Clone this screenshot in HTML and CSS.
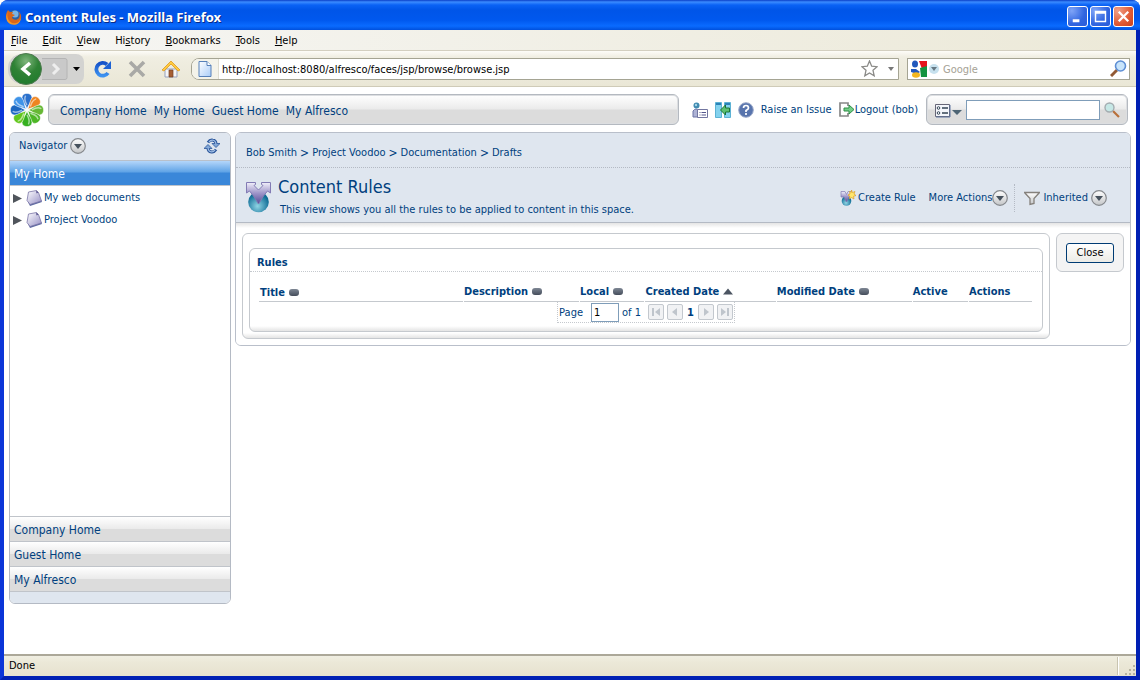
FILE: index.html
```html
<!DOCTYPE html>
<html lang="en">
<head>
<meta charset="utf-8">
<title>Content Rules - Mozilla Firefox</title>
<link rel="stylesheet" href="styles.css">
</head>
<body>
<svg class="defs" aria-hidden="true">
  <defs>
    <linearGradient id="silver" x1="0" y1="0" x2="0" y2="1"><stop offset="0" stop-color="#fff"/><stop offset="1" stop-color="#c4c6c8"/></linearGradient>
    <linearGradient id="blueG" x1="0" y1="0" x2="0" y2="1"><stop offset="0" stop-color="#1552c8"/><stop offset="1" stop-color="#3d92f0"/></linearGradient>
    <radialGradient id="greenG" cx=".5" cy=".25" r=".8"><stop offset="0" stop-color="#7fb57c"/><stop offset=".5" stop-color="#2f8235"/><stop offset="1" stop-color="#1f7a2c"/></radialGradient>
    <radialGradient id="teal" cx=".45" cy=".7" r=".6"><stop offset="0" stop-color="#8fd4e4"/><stop offset="1" stop-color="#0c6a94"/></radialGradient>
    <linearGradient id="violetV" x1="0" y1="0" x2="0" y2="1"><stop offset="0" stop-color="#f2f0fb"/><stop offset=".5" stop-color="#9d94c8"/><stop offset="1" stop-color="#554b98"/></linearGradient>
    <linearGradient id="spaceG" x1="0" y1="0" x2="1" y2="1"><stop offset="0" stop-color="#fff"/><stop offset=".8" stop-color="#aaa5d0"/><stop offset="1" stop-color="#7f79b2"/></linearGradient>
    <linearGradient id="page" x1="0" y1="0" x2="1" y2="1"><stop offset="0" stop-color="#fff"/><stop offset="1" stop-color="#a9ccf8"/></linearGradient>
    <linearGradient id="pill" x1="0" y1="0" x2="0" y2="1"><stop offset="0" stop-color="#7e8794"/><stop offset="1" stop-color="#454d5b"/></linearGradient>
    <symbol id="drop" viewBox="0 0 16 16"><circle cx="8" cy="8" r="7.3" fill="url(#silver)" stroke="#85888c" stroke-width="1.2"/><path d="M4 6h8l-4 5z" fill="#47525d"/></symbol>
    <symbol id="pillIcon" viewBox="0 0 10 7"><rect width="10" height="7" rx="3" fill="url(#pill)"/></symbol>
    <symbol id="space" viewBox="0 0 16 16"><path d="M2 12l2 4 12-4-1-2z" fill="#5b6aa2"/><path d="M2.500 2l8-1.500 2 2 3 8.500-11.500 3.500-3-4z" fill="url(#spaceG)" stroke="#7a75a6" stroke-width=".8"/><path d="M10 .5l.5 3 2-1z" fill="#5b5690"/></symbol>
    <symbol id="rule" viewBox="0 0 26 32"><circle cx="12.500" cy="21" r="10.300" fill="url(#teal)"/><path d="M.5 1.500h9v2l-1.500 1 4.500 4.500L17 4.500l-1.500-1v-2h9V12l-3-2-4 5-5 8-5-8-4-5-3 2z" fill="url(#violetV)" stroke="#827bb4"/></symbol>
    <symbol id="petal" viewBox="-16 -16 32 32" overflow="visible"><path d="M0-1C-.5-4-4.700-8-4.700-11.500-4.700-17 4.700-17 4.700-11.500 4.700-8 .5-4 0-1z" fill="currentColor" stroke="#fff" stroke-width=".5"/><path d="M-.3-5Q-3-10-1.500-13" fill="none" stroke="#fff" stroke-opacity=".55" stroke-width="1.400" stroke-linecap="round"/></symbol>
    <symbol id="turn" viewBox="0 0 16 16" overflow="visible"><path d="M4 4.500Q6 1.500 8.500 2 12 2.500 12 6" fill="none" stroke="#2c579b" stroke-width="3"/><path d="M8 5.500h8l-4 4z" fill="#7fa5d6" stroke="#2c579b" stroke-width=".8"/><path d="M5 4.200Q6.500 2 8.500 2.200 11.800 2.600 12 6.500" fill="none" stroke="#9dbce4" stroke-width="1.200"/></symbol>
  </defs>
</svg>
<div class="window">
  <header class="titlebar">
    <svg class="i16" viewBox="0 0 16 16"><circle cx="8" cy="8" r="7" fill="#2b62a8"/><circle cx="9" cy="5" r="3.500" fill="#79b4e5"/><path d="M2 1l2 2 3 0-1 2 3 1-3 2c0 3 5 4 7 1 1-2 1-5-1-7 4 3 4 8 1 11-4 4-10 2-12-2S0 4 2 1z" fill="#d9661a"/><path d="M2 3c-2 4 0 9 4 11 3 1 7 0 9-5-1 8-10 9-14 3C0 9 0 6 2 3z" fill="#f0962a"/></svg>
    <h1>Content Rules - Mozilla Firefox</h1>
    <div class="winbtns">
      <button class="wb" aria-label="Minimize"><svg viewBox="0 0 20 20"><path d="M5 13h7v3H5z" fill="#fff"/></svg></button>
      <button class="wb" aria-label="Maximize"><svg viewBox="0 0 20 20"><path d="M4 4h12v12H4zM5.500 7v7.500h9V7z" fill="#fff" fill-rule="evenodd"/></svg></button>
      <button class="wb red" aria-label="Close window"><svg viewBox="0 0 20 20"><path d="M5 5l10 10M15 5L5 15" stroke="#fff" stroke-width="2.400"/></svg></button>
    </div>
  </header>
  <div class="frame">
    <nav class="menubar">
      <button><u>F</u>ile</button><button><u>E</u>dit</button><button><u>V</u>iew</button><button>Hi<u>s</u>tory</button><button><u>B</u>ookmarks</button><button><u>T</u>ools</button><button><u>H</u>elp</button>
    </nav>
    <div class="toolbar">
      <div class="backfwd">
        <button class="back" aria-label="Back"><svg viewBox="0 0 32 32"><circle cx="16" cy="16" r="15.500" fill="url(#greenG)" stroke="#4f7a50"/><path d="M20 10l-7 6 7 6" fill="none" stroke="#fff" stroke-width="3.500"/></svg></button>
        <button class="fwd" aria-label="Forward"><svg viewBox="0 0 26 22"><path d="M0 .5h23q2 0 2 2v17q0 2-2 2H0" fill="#c9c9c9" stroke="#b4b4b4"/><path d="M11 6l5 5-5 5" fill="none" stroke="#eee" stroke-width="3"/></svg></button>
        <button class="hist" aria-label="History list"><svg viewBox="0 0 7 4"><path d="M0 0h7L3.500 4z"/></svg></button>
      </div>
      <button class="tb" aria-label="Reload"><svg viewBox="0 0 18 18"><path d="M14 13A6.400 6.400 0 1 1 13 4.500" fill="none" stroke="url(#blueG)" stroke-width="3.800"/><path d="M17 1v8H9z" fill="#1d62d4"/></svg></button>
      <button class="tb" aria-label="Stop"><svg viewBox="0 0 18 18"><path d="M2 2l14 14M16 2L2 16" stroke="#a9a9a6" stroke-width="3.600"/></svg></button>
      <button class="tb" aria-label="Home"><svg viewBox="0 0 18 18"><path d="M3 9h12v8H3z" fill="#f5f5f7" stroke="#96a1bd"/><path d="M7 10h4v7H7z" fill="#a65f34" stroke="#724326" stroke-width=".7"/><path d="M0 10L9 1l9 9-2 1-7-7-7 7z" fill="#ffcb3e" stroke="#dd9821" stroke-width=".8"/></svg></button>
      <form class="url">
        <svg class="pageicon" viewBox="0 0 15 18"><path d="M1.500 1.500h8l4 4v11h-12z" fill="url(#page)" stroke="#5780b9"/><path d="M9.500 1.500v4h4" fill="#fff" stroke="#5780b9"/></svg>
        <input type="text" aria-label="Address" value="http://localhost:8080/alfresco/faces/jsp/browse/browse.jsp">
        <button type="button" class="star" aria-label="Bookmark"><svg viewBox="0 0 17 17"><path d="M8.500 1l2.200 5.200 5.300.5-4 3.600 1.200 5.500-4.700-2.900-4.700 2.900L5 10.300 1 6.700l5.300-.5z" fill="#fff" stroke="#8b8b88" stroke-width="1.300"/></svg></button>
        <button type="button" class="mini" aria-label="Show history"><svg viewBox="0 0 6 4"><path d="M0 0h6L3 4z" fill="#777"/></svg></button>
      </form>
      <form class="gsearch">
        <button type="button" class="engine" aria-label="Search engine"><svg viewBox="0 0 30 20"><path d="M9 2h8v7l-5 1z" fill="#e5131a"/><path d="M10 9l7-2v11h-6z" fill="#14933f"/><ellipse cx="5" cy="5" rx="3" ry="3.600" fill="#2158bc"/><path d="M1 10h5l4 3-3 2-6-2z" fill="#2158bc"/><ellipse cx="6" cy="16" rx="4" ry="2.700" fill="#f3b61f"/><circle cx="24" cy="10" r="5" fill="#c7e1ee"/><path d="M21 8h6l-3 4z" fill="#667883"/></svg></button>
        <input type="text" aria-label="Web search" placeholder="Google">
        <button type="button" class="star" aria-label="Search"><svg viewBox="0 0 17 17"><path d="M1 16l6-6" stroke="#925a36" stroke-width="3"/><circle cx="10.500" cy="6" r="5" fill="#c8e4fb" stroke="#5e8ed4" stroke-width="1.600"/></svg></button>
      </form>
    </div>

    <div class="page">
      <div class="apphead">
        <svg class="logo" viewBox="-16 -16 32 32">
          <g color="#2a70cc"><use href="#petal" x="-16" y="-16" width="32" height="32"/></g>
          <g color="#ee8420" transform="rotate(45)"><use href="#petal" x="-16" y="-16" width="32" height="32"/></g>
          <g color="#66b834" transform="rotate(90)"><use href="#petal" x="-16" y="-16" width="32" height="32"/></g>
          <g color="#4db626" transform="rotate(135)"><use href="#petal" x="-16" y="-16" width="32" height="32"/></g>
          <g color="#36b020" transform="rotate(180)"><use href="#petal" x="-16" y="-16" width="32" height="32"/></g>
          <g color="#62c71c" transform="rotate(225)"><use href="#petal" x="-16" y="-16" width="32" height="32"/></g>
          <g color="#1b66c0" transform="rotate(270)"><use href="#petal" x="-16" y="-16" width="32" height="32"/></g>
          <g color="#3f93e8" transform="rotate(315)"><use href="#petal" x="-16" y="-16" width="32" height="32"/></g>
        </svg>
        <nav class="tabs"><a href="#">Company Home</a><a href="#">My Home</a><a href="#">Guest Home</a><a href="#">My Alfresco</a></nav>
        <div class="tools">
          <a href="#" aria-label="User profile"><svg class="i16" viewBox="0 0 16 16"><path d="M1 15V9q3-4 6 0v6z" fill="#adb2d5" stroke="#6d74a6"/><circle cx="4.500" cy="3.500" r="3" fill="#3f8ab0"/><circle cx="4" cy="3" r="1.200" fill="#a5d4e6"/><path d="M5.500 7.500h10v8h-10z" fill="#fff" stroke="#7276a0"/><path d="M7.500 10.500h1m1 0h4.500M7.500 13h1m1 0h4.500" stroke="#55578d"/></svg></a>
          <a href="#" aria-label="Toggle shelf"><svg class="i16" viewBox="0 0 16 16"><path d="M.5.500h6v15h-6zM9.500.500h6v15h-6z" fill="#83d2ee" stroke="#5cb2d4"/><path d="M1 1h5v2H1zM10 1h5v2h-5z" fill="#2b82b8"/><path d="M5.500 8l5-5v3h4v4h-4v3z" fill="#5cc072" stroke="#187434"/></svg></a>
          <a href="#" aria-label="Help"><svg class="i16" viewBox="0 0 16 16"><circle cx="8" cy="8" r="7.300" fill="#5874ad" stroke="#9ba9c9"/><path d="M5.500 6q0-2.500 2.500-2.500T10.500 6Q10.500 7.300 8 8.500V10M8 11v2" fill="none" stroke="#fff" stroke-width="1.700"/></svg></a>
          <a href="#" class="issue">Raise an Issue</a>
          <a href="#" class="logout"><svg class="i16" viewBox="0 0 16 16"><path d="M9 4V1H1v13h8v-3" fill="none" stroke="#888" stroke-width="1.700"/><path d="M5 6h5V3l5 4.500-5 4.500V9H5z" fill="#72cf87" stroke="#2e8c47"/></svg>Logout (bob)</a>
        </div>
        <form class="asearch">
          <button type="button" class="opts" aria-label="Search options"><svg viewBox="0 0 28 14"><path d="M.5.500h14v12H.5z" fill="#f4f6fb" stroke="#667"/><path d="M1 13h14V1" fill="none" stroke="#5e74a0"/><circle cx="3.500" cy="4" r="1.300" fill="#fff" stroke="#334455"/><circle cx="3.500" cy="9" r="1.300" fill="#fff" stroke="#334455"/><path d="M7 4h6M7 9h6" stroke="#334455" stroke-width="1.600"/><path d="M17 6h10l-5 5z" fill="#4d6474"/></svg></button>
          <input type="text" aria-label="Search content">
          <button type="button" class="go" aria-label="Go"><svg class="i16" viewBox="0 0 16 16"><path d="M9 9l6 6" stroke="#b8703b" stroke-width="2.200"/><circle cx="5.500" cy="5.500" r="4.500" fill="#c6e8e6" stroke="#a3acb0" stroke-width="1.400"/></svg></button>
        </form>
      </div>

      <div class="cols">
        <aside class="navigator">
          <div class="navhead"><span>Navigator</span><button aria-label="Navigator menu"><svg class="i16"><use href="#drop"/></svg></button>
            <button class="refresh" aria-label="Refresh"><svg class="i16" viewBox="0 0 16 16"><use href="#turn" width="16" height="16"/><use href="#turn" width="16" height="16" transform="rotate(180 8 8)"/></svg></button></div>
          <a href="#" class="current">My Home</a>
          <ul class="tree">
            <li><svg class="tri" viewBox="0 0 9 9"><path d="M0 0l9 4.500L0 9z"/></svg><a href="#"><svg class="i16"><use href="#space"/></svg>My web documents</a></li>
            <li><svg class="tri" viewBox="0 0 9 9"><path d="M0 0l9 4.500L0 9z"/></svg><a href="#"><svg class="i16"><use href="#space"/></svg>Project Voodoo</a></li>
          </ul>
          <a href="#" class="area">Company Home</a><a href="#" class="area">Guest Home</a><a href="#" class="area">My Alfresco</a>
          <div class="navfoot"></div>
        </aside>
        <main class="main">
          <nav class="crumbs"><a href="#">Bob Smith</a><b>&gt;</b><a href="#">Project Voodoo</a><b>&gt;</b><a href="#">Documentation</a><b>&gt;</b><a href="#">Drafts</a></nav>
          <div class="heading">
            <svg class="ruleicon"><use href="#rule"/></svg>
            <div class="titles"><h2>Content Rules</h2><p>This view shows you all the rules to be applied to content in this space.</p></div>
            <div class="actions">
              <a href="#" class="create"><svg class="i16" viewBox="0 0 16 16"><circle cx="6.500" cy="11" r="4.800" fill="url(#teal)"/><path d="M1 1.500h4l1.500 3L8 1.500h3V7L9 7l-2.500 5L4 7 1 7z" fill="url(#violetV)" stroke="#827bb4" stroke-width=".7"/><path d="M11.500 0l1 2.500L15 1.500 14 4l2 1.500-2.500.8.500 2.700-2.500-1.500L9.500 9l.3-2.700L8 5l2-1-.5-2.500 2 .8z" fill="#ffe66d" stroke="#dc9e28" stroke-width=".7"/></svg>Create Rule</a>
              <button class="more">More Actions<svg class="i16"><use href="#drop"/></svg></button>
              <button class="inherited"><svg class="i16" viewBox="0 0 16 16"><path d="M.5 2.500h15L10 8.500v5l-4 1v-6z" fill="url(#silver)" stroke="#85817c" stroke-width="1.300"/></svg><span>Inherited</span><svg class="i16"><use href="#drop"/></svg></button>
            </div>
          </div>
          <div class="body">
            <section class="panel"><div class="inner">
              <h3>Rules</h3>
              <table>
                <colgroup><col class="c1"><col class="c2"><col class="c3"><col class="c4"><col class="c5"><col class="c6"><col class="c7"></colgroup>
                <thead><tr>
                  <th><a href="#">Title<svg class="sort"><use href="#pillIcon"/></svg></a></th>
                  <th><a href="#">Description<svg class="sort"><use href="#pillIcon"/></svg></a></th>
                  <th><a href="#">Local<svg class="sort"><use href="#pillIcon"/></svg></a></th>
                  <th><a href="#">Created Date<svg class="sort" viewBox="0 0 10 7"><path d="M0 6.500L5 .5l5 6z" fill="#4c5562"/></svg></a></th>
                  <th><a href="#">Modified Date<svg class="sort"><use href="#pillIcon"/></svg></a></th>
                  <th>Active</th><th>Actions</th>
                </tr></thead>
              </table>
              <form class="pager">
                <label for="pg">Page</label><input id="pg" type="text" value="1"><span>of 1</span>
                <button type="button" class="p first" aria-label="First page"><svg viewBox="0 0 14 14"><path d="M3 3h2v8H3zM11 3v8L6 7z"/></svg></button>
                <button type="button" class="p" aria-label="Previous page"><svg viewBox="0 0 14 14"><path d="M9 3v8L4 7z"/></svg></button>
                <strong>1</strong>
                <button type="button" class="p" aria-label="Next page"><svg viewBox="0 0 14 14"><path d="M5 3v8l5-4z"/></svg></button>
                <button type="button" class="p" aria-label="Last page"><svg viewBox="0 0 14 14"><path d="M3 3v8l5-4zM9 3h2v8H9z"/></svg></button>
              </form>
            </div></section>
            <div class="closebox"><button>Close</button></div>
          </div>
        </main>
      </div>
    </div>
    <footer class="status"><span>Done</span><svg class="grip" viewBox="0 0 20 18"><path d="M1.500 0v18" stroke="#c8c4b0"/><path d="M2.500 0v18" stroke="#fff"/><path d="M17 8h2v2h-2zM13 12h2v2h-2zM17 12h2v2h-2zM9 16h2v2H9zM13 16h2v2h-2zM17 16h2v2h-2z" fill="#b6b3a0"/></svg></footer>
  </div>
</div>
</body>
</html>
```
FILE: styles.css
```css
* { box-sizing: border-box; }
body { margin: 0; background: #fff; font: 11px/14px "DejaVu Sans Condensed", Tahoma, "DejaVu Sans", sans-serif; color: #003f7e; }
button, input { font: inherit; color: inherit; margin: 0; padding: 0; border: 0; background: none; min-width: 0; }
button { flex: none; }
button svg { display: block; width: 100%; height: 100%; }
svg { flex: none; }
a { color: inherit; text-decoration: none; }
h1, h2, h3, p, ul { margin: 0; padding: 0; }
.defs { position: absolute; width: 0; height: 0; }
.i16, button .i16 { width: 16px; height: 16px; }

.window { min-height: 100vh; display: flex; flex-direction: column; background: #0a4be0; border-radius: 8px 8px 0 0; overflow: hidden; }
.titlebar { height: 30px; display: flex; align-items: center; gap: 3px; padding: 3px 6px 0; background: linear-gradient(#0a3fc8 0, #3b8bff 2px, #0a62f5 5px, #0055e8 10px, #0058ee 20px, #0a6bff 26px, #0050dd 30px); }
.titlebar h1 { flex: 1; font: bold 13px/16px "Noto Sans", sans-serif; color: #fff; text-shadow: 1px 1px #0a2a86; }
.winbtns { display: flex; gap: 2px; }
.wb { width: 21px; height: 21px; border: 1px solid #fff; border-radius: 3px; background: radial-gradient(circle at 20% 20%, #7fa4f7, #3065e0 60%, #2a5bd8); }
.wb.red { background: radial-gradient(circle at 20% 20%, #f0a088, #e05a34 60%, #c8401c); }
.frame { flex: 1; display: flex; flex-direction: column; border: solid; border-width: 0 4px 4px; border-color: #0a45e8 #0020b4 #0020b4 #0a35d8; }
.menubar { height: 21px; display: flex; align-items: center; gap: 15px; padding: 1px 7px 0; color: #000; background: linear-gradient(90deg, #f6f6f4, #ece9d8); border-bottom: 1px solid #d3cfc0; }
.toolbar { height: 36px; display: flex; align-items: center; padding: 0 6px 0 4px; color: #000; background: linear-gradient(#fdfcf8, #f0eee2 6px, #eae7d6); border-bottom: 1px solid #cfcbb8; }
.backfwd { display: flex; align-items: center; width: 76px; height: 30px; border-radius: 14px 8px 8px 14px; background: #d3d3d1; }
.back { width: 32px; height: 32px; margin-left: 2px; }
.fwd { width: 26px; height: 22px; }
.hist { width: 7px; height: 4px; margin-left: 5px; }
.tb { width: 18px; height: 18px; margin-left: 16px; }
.backfwd + .tb { margin-left: 10px; }
.url, .gsearch { display: flex; align-items: center; height: 22px; background: #fff; border: 1px solid #a5a493; }
.url { flex: 1; margin-left: 11px; border-radius: 8px 0 0 8px; padding-right: 4px; overflow: hidden; }
.pageicon { width: 27px; height: 20px; padding: 1px 0; background: #f4f3ea; border-right: 1px solid #dedccf; }
.url input, .gsearch input { flex: 1; height: 20px; padding: 2px 0 0 3px; }
.star { width: 17px; height: 17px; }
.mini { width: 6px; height: 4px; margin-left: 10px; }
.gsearch { width: 223px; margin-left: 8px; padding: 0 2px; }
.engine { width: 30px; height: 20px; }
input::placeholder { color: #a5a295; opacity: 1; }

.page { flex: 1; background: #fff; padding: 7px 5px 8px; }
.apphead { display: flex; align-items: center; height: 31px; padding: 0 3px 0 1px; }
.logo { width: 34px; height: 34px; }
.tabs, .asearch { height: 31px; display: flex; align-items: center; border: 1px solid #b4b9c0; border-radius: 6px; background: linear-gradient(#fff, #ebebeb 48%, #dcdcdc 52%, #dcdcdc); box-shadow: inset 0 0 0 1px #dcdee1; }
.tabs { flex: 1; gap: 7px; margin-left: 4px; padding: 3px 0 0 11px; font: 12px/16px "DejaVu Sans Condensed", sans-serif; }
.tools { display: flex; align-items: center; gap: 7px; margin: 1px 8px 0 13px; }
.tools > a { display: flex; align-items: center; }
.asearch { width: 202px; padding: 0 7px 0 8px; }
.opts { width: 28px; height: 14px; margin-top: 2px; }
.asearch input { flex: 1; height: 20px; margin: 0 4px 0 3px; border: 1px solid #7f9db9; background: #fff; }

.cols { display: flex; align-items: flex-start; gap: 4px; margin-top: 7px; }
.navigator { flex: none; width: 222px; display: flex; flex-direction: column; border: 1px solid #b4bac4; border-radius: 6px; overflow: hidden; background: #fff; }
.navhead { display: flex; align-items: center; gap: 3px; height: 28px; padding: 0 10px 1px 9px; background: #dfe6ef; border-bottom: 1px solid #b9c0ca; }
.refresh { margin-left: auto; }
.current, .area { height: 25px; padding: 5px 4px 0; border-bottom: 1px solid #c0c4ca; font: 12px/16px "DejaVu Sans Condensed", sans-serif; }
.current { color: #fff; background: linear-gradient(#b4d6fa, #5fa3e6 46%, #3a87d9 50%, #3a87d9); }
.tree { list-style: none; height: 331px; border-bottom: 1px solid #c0c4ca; padding-top: 1px; }
.tree li { display: flex; align-items: center; gap: 4px; height: 22px; padding-left: 3px; }
.tree a { display: flex; align-items: center; gap: 2px; }
.tri { width: 9px; height: 9px; fill: #50555c; }
.area { background: linear-gradient(#fff, #ebebeb 48%, #dcdcdc 52%, #dcdcdc); }
.navfoot { height: 11px; background: #dfe6ef; }

.main { flex: 1; min-width: 0; border: 1px solid #b9bfca; border-radius: 6px; overflow: hidden; background: #fff; }
.crumbs { height: 35px; display: flex; align-items: center; gap: 3px; padding: 5px 10px 0; background: #dfe6ef; border-bottom: 1px dotted #b4bac4; }
.crumbs b { font: 12px/14px "DejaVu Sans Condensed", sans-serif; }
.heading { display: flex; height: 55px; padding: 9px 23px 0 10px; background: #dfe6ef; border-bottom: 1px solid #b4bac4; }
.ruleicon { width: 26px; height: 32px; margin-top: 4px; }
.titles { flex: 1; padding-left: 6px; }
.titles h2 { font: 18px/20px "DejaVu Sans Condensed", sans-serif; }
.titles p { padding: 6px 0 0 2px; white-space: nowrap; }
.actions { display: flex; align-items: center; height: 41px; white-space: nowrap; }
.actions a, .actions button { display: flex; align-items: center; }
.create { gap: 2px; }
.more { margin: 0 6px 0 13px; }
.inherited { height: 28px; gap: 3px; padding-left: 9px; border-left: 1px dotted #b4bac4; }
.body { display: flex; align-items: flex-start; gap: 6px; padding: 10px 6px 6px; background: linear-gradient(#e4e4e4, #fff 5px); }
.panel { flex: 1; min-width: 0; padding: 14px 6px 6px; border: 1px solid #c5c9ce; border-radius: 6px; background: linear-gradient(#fff calc(100% - 5px), #e4e4e4); }
.inner { border: 1px solid #c5c9ce; border-radius: 6px; background: linear-gradient(#fff calc(100% - 5px), #e4e4e4); padding-bottom: 8px; }
.inner h3 { height: 23px; padding: 7px 7px 0; border-bottom: 1px dotted #c5c9ce; font-size: 11px; line-height: 14px; }
table { width: calc(100% - 17px); margin-left: 8px; border-spacing: 1px 0; table-layout: fixed; }
.c1 { width: 26.600%; } .c2 { width: 15%; } .c3 { width: 8.400%; } .c4 { width: 17%; } .c5 { width: 17.600%; } .c6 { width: 7.200%; }
th { height: 30px; padding: 10px 0 0; text-align: left; border-bottom: 1px solid #c5c9ce; white-space: nowrap; }
th:first-child { padding: 13px 0 0 1px; }
.sort { width: 10px; height: 7px; margin-left: 4px; }
.pager { display: flex; align-items: center; width: max-content; height: 21px; margin: 0 auto; padding: 0 1px; border: 1px dotted #c5c9ce; border-top: 0; }
.pager input { width: 28px; height: 19px; margin: 0 3px 0 8px; padding-left: 2px; color: #000; border: 1px solid #7f9db9; background: #fff; }
.pager label, .pager span, .pager strong { padding-top: 2px; }
.p { width: 16px; height: 16px; margin-left: 3px; border: 1px solid #c3c8ce; border-radius: 2px; background: #f1f2f4; fill: #bfc5cc; }
.first { margin-left: 7px; }
.pager strong { margin: 0 1px 0 4px; }
.closebox { flex: none; width: 68px; padding: 9px 9px 8px; border: 1px solid #c5c9ce; border-radius: 6px; background: #f4f4f4; }
.closebox button { display: block; width: 100%; height: 20px; color: #000; border: 1px solid #003c74; border-radius: 3px; background: linear-gradient(#fff, #ecebe5); }

.status { height: 22px; display: flex; align-items: center; justify-content: space-between; padding-left: 5px; color: #000; border-top: 2px solid #aca899; background: linear-gradient(#f0eee2, #ece9d8 6px, #e6e2cf); }
.grip { width: 20px; height: 18px; }
```
